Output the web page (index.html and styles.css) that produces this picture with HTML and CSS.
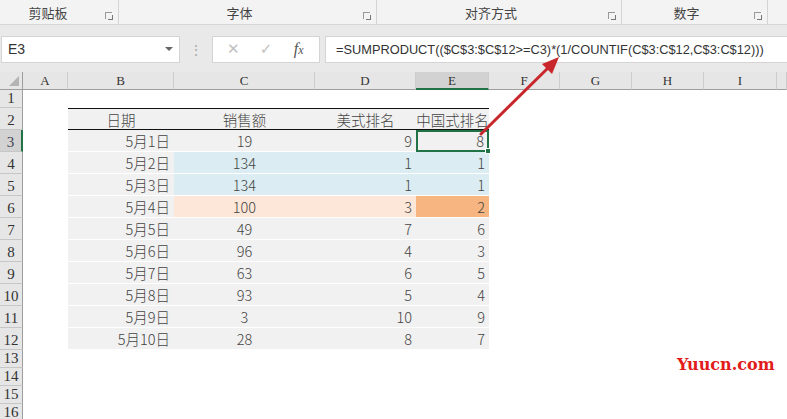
FILE: index.html
```html
<!DOCTYPE html>
<html lang="zh-CN">
<head>
    <meta charset="UTF-8">
    <title>中国式排名</title>
    <link rel="stylesheet" href="styles.css">
</head>
<body>
    <div class="ribbon">
        <div class="group g1"><span>剪贴板</span><i class="launcher"></i></div>
        <div class="group g2"><span>字体</span><i class="launcher"></i></div>
        <div class="group g3"><span>对齐方式</span><i class="launcher"></i></div>
        <div class="group g4"><span>数字</span><i class="launcher"></i></div>
    </div>

    <div class="formula-bar">
        <div class="name-box">E3<span class="caret"></span></div>
        <div class="grip">⋮</div>
        <div class="fx-buttons">
            <span class="btn">✕</span>
            <span class="btn">✓</span>
            <span class="btn fx"><i>f</i><i class="x">x</i></span>
        </div>
        <div class="formula">=SUMPRODUCT(($C$3:$C$12&gt;=C3)*(1/COUNTIF(C$3:C$12,C$3:C$12)))</div>
    </div>

    <div class="sheet">
        <!-- column headers -->
        <div class="ch corner"></div>
        <div class="ch">A</div>
        <div class="ch">B</div>
        <div class="ch">C</div>
        <div class="ch">D</div>
        <div class="ch active">E</div>
        <div class="ch">F</div>
        <div class="ch">G</div>
        <div class="ch">H</div>
        <div class="ch">I</div>
        <div class="ch"></div>

        <div class="rh">1</div><div class="blank"></div>

        <div class="rh">2</div><div class="empty"></div>
        <div class="c head">日期</div>
        <div class="c head">销售额</div>
        <div class="c head">美式排名</div>
        <div class="c head">中国式排名</div>
        <div class="rest"></div>

        <div class="rh active">3</div><div class="empty"></div>
        <div class="c date">5月1日</div><div class="c mid">19</div><div class="c num">9</div><div class="c num selected">8<span class="handle"></span></div>
        <div class="rest"></div>

        <div class="rh">4</div><div class="empty"></div>
        <div class="c date">5月2日</div><div class="c mid blue">134</div><div class="c num blue">1</div><div class="c num blue">1</div>
        <div class="rest"></div>

        <div class="rh">5</div><div class="empty"></div>
        <div class="c date">5月3日</div><div class="c mid blue">134</div><div class="c num blue">1</div><div class="c num blue">1</div>
        <div class="rest"></div>

        <div class="rh">6</div><div class="empty"></div>
        <div class="c date">5月4日</div><div class="c mid peach">100</div><div class="c num peach">3</div><div class="c num orange">2</div>
        <div class="rest"></div>

        <div class="rh">7</div><div class="empty"></div>
        <div class="c date">5月5日</div><div class="c mid">49</div><div class="c num">7</div><div class="c num">6</div>
        <div class="rest"></div>

        <div class="rh">8</div><div class="empty"></div>
        <div class="c date">5月6日</div><div class="c mid">96</div><div class="c num">4</div><div class="c num">3</div>
        <div class="rest"></div>

        <div class="rh">9</div><div class="empty"></div>
        <div class="c date">5月7日</div><div class="c mid">63</div><div class="c num">6</div><div class="c num">5</div>
        <div class="rest"></div>

        <div class="rh">10</div><div class="empty"></div>
        <div class="c date">5月8日</div><div class="c mid">93</div><div class="c num">5</div><div class="c num">4</div>
        <div class="rest"></div>

        <div class="rh">11</div><div class="empty"></div>
        <div class="c date">5月9日</div><div class="c mid">3</div><div class="c num">10</div><div class="c num">9</div>
        <div class="rest"></div>

        <div class="rh">12</div><div class="empty"></div>
        <div class="c date">5月10日</div><div class="c mid">28</div><div class="c num">8</div><div class="c num">7</div>
        <div class="rest"></div>

        <div class="rh">13</div><div class="blank"></div>
        <div class="rh">14</div><div class="blank"></div>
        <div class="rh">15</div><div class="blank"></div>
        <div class="rh">16</div><div class="blank"></div>
    </div>

    <svg class="arrow" width="787" height="419" viewBox="0 0 787 419">
        <line x1="481" y1="134" x2="549" y2="67" stroke="#c8282c" stroke-width="3" stroke-linecap="round"/>
        <polygon points="559,57 542,64 552,74" fill="#c8282c"/>
    </svg>

    <div class="watermark">Yuucn.com</div>
</body>
</html>
```

FILE: styles.css
```css
* {
    box-sizing: border-box;
}

body {
    margin: 0;
    width: 787px;
    height: 419px;
    overflow: hidden;
    background: #fff;
    font-family: "Noto Sans CJK SC", "Noto Sans", sans-serif;
    color: #333;
    position: relative;
}

/* ribbon group labels */
.ribbon {
    display: flex;
    height: 25px;
    background: #f3f3f3;
    border-bottom: 1px solid #d6d6d6;
}

.group {
    display: flex;
    align-items: center;
    justify-content: center;
    position: relative;
    border-right: 1px solid #d4d4d4;
    font-size: 13px;
    color: #444;
    padding-right: 16px;
    height: 24px;
}

.g1 { width: 119px; padding-right: 22px; }
.g2 { width: 258px; }
.g3 { width: 245px; }
.g4 { width: 146px; }

.launcher {
    position: absolute;
    right: 6px;
    top: 12px;
    width: 7px;
    height: 7px;
    border-left: 1px solid #999;
    border-top: 1px solid #999;
}

.launcher::after {
    content: "";
    position: absolute;
    right: -1px;
    bottom: -1px;
    width: 4px;
    height: 4px;
    border-right: 1px solid #777;
    border-bottom: 1px solid #777;
}

/* formula bar */
.formula-bar {
    display: flex;
    align-items: center;
    height: 47px;
    padding: 10px 0 9px 1px;
    background: #e9e9e9;
}

.name-box {
    display: flex;
    align-items: center;
    justify-content: space-between;
    width: 179px;
    height: 27px;
    padding: 0 6px 0 6px;
    background: #fff;
    border: 1px solid #d4d4d4;
    font-family: "Liberation Sans", sans-serif;
    font-size: 14px;
    color: #333;
}

.caret {
    width: 0;
    height: 0;
    border-left: 4px solid transparent;
    border-right: 4px solid transparent;
    border-top: 4px solid #666;
}

.grip {
    width: 32px;
    text-align: center;
    color: #aaa;
    font-size: 14px;
}

.fx-buttons {
    display: flex;
    align-items: center;
    justify-content: space-around;
    width: 108px;
    height: 27px;
    background: #fff;
    border: 1px solid #d4d4d4;
    padding: 0 4px;
}

.btn {
    color: #c0c0c0;
    font-family: "DejaVu Sans", sans-serif;
    font-size: 15px;
    width: 26px;
    text-align: center;
}

.btn.fx {
    color: #555;
    font-family: "Liberation Serif", serif;
    font-size: 16px;
    font-style: italic;
}

.btn.fx .x {
    font-size: 12px;
}

.formula {
    flex: 1;
    height: 27px;
    margin-left: 5px;
    padding-left: 10px;
    background: #fff;
    border: 1px solid #d4d4d4;
    border-right: none;
    font-family: "Liberation Sans", sans-serif;
    font-size: 12.8px;
    line-height: 25px;
    color: #333;
    white-space: nowrap;
}

/* worksheet */
.sheet {
    display: grid;
    grid-template-columns: 23px 45px 106px 141px 101px 73px 71px 72px 72px 73px 1fr;
    grid-template-rows: 18px 18px 22px repeat(10, 22px) repeat(4, 18px);
}

.ch {
    background: #e6e6e6;
    border-right: 1px solid #cdcdcd;
    border-bottom: 1px solid #9e9e9e;
    font-family: "Liberation Serif", serif;
    font-size: 13px;
    color: #333;
    text-align: center;
    line-height: 17px;
}

.ch.active {
    background: #d2d2d2;
    border-bottom: 2px solid #217346;
}

.corner {
    position: relative;
    border-right: 1px solid #9e9e9e;
}

.corner::after {
    content: "";
    position: absolute;
    right: 3px;
    bottom: 3px;
    border-left: 10px solid transparent;
    border-bottom: 10px solid #b4b4b4;
}

.rh {
    background: #e6e6e6;
    border-right: 1px solid #9e9e9e;
    border-bottom: 1px solid #c6c6c6;
    font-family: "Liberation Serif", serif;
    font-size: 15px;
    color: #333;
    text-align: center;
    display: flex;
    align-items: flex-end;
    justify-content: center;
    line-height: 17px;
}

.rh.active {
    background: #d2d2d2;
    border-right: 2px solid #217346;
    color: #445;
}

.blank {
    grid-column: 2 / -1;
}

.rest {
    grid-column: 7 / -1;
}

.c {
    background: #f1f1f1;
    border-bottom: 1px solid #fff;
    font-size: 14.5px;
    font-weight: 300;
    line-height: 21px;
    color: #444;
    padding: 0 4px;
    white-space: nowrap;
}

.c.head {
    background: #f1f1f1;
    border-top: 1px solid #111;
    border-bottom: 1px solid #111;
    text-align: center;
    padding: 0;
    font-size: 14.5px;
    line-height: 21px;
    overflow: hidden;
}

.c.date,
.c.num {
    text-align: right;
}

.c.mid {
    text-align: center;
}

.c.blue { background: #dbedf2; }
.c.peach { background: #fce7d8; }
.c.orange { background: #f6b581; }

.c.selected {
    position: relative;
    border: 2px solid #217346;
    padding-right: 3px;
    line-height: 18px;
}

.handle {
    position: absolute;
    right: -4px;
    bottom: -4px;
    width: 6px;
    height: 6px;
    background: #217346;
    border: 1px solid #fff;
}

/* annotation overlay */
.arrow {
    position: absolute;
    left: 0;
    top: 0;
    pointer-events: none;
}

.watermark {
    position: absolute;
    left: 677px;
    top: 355px;
    font-family: "DejaVu Serif", serif;
    font-weight: bold;
    font-size: 16px;
    color: #e21b1b;
}
```
